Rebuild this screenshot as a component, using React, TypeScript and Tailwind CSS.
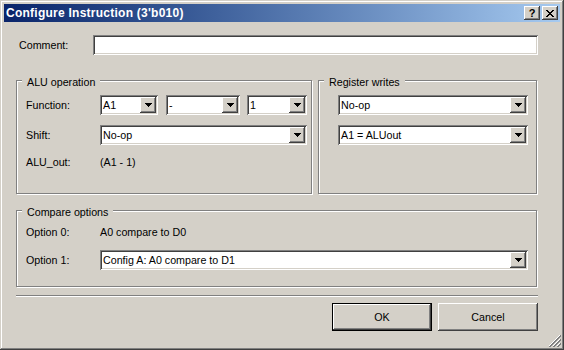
import React from "react";

const raised =
  "shadow-[inset_-1px_-1px_#404040,inset_1px_1px_#ffffff,inset_-2px_-2px_#808080,inset_2px_2px_#d4d0c8]";
const sunken =
  "shadow-[inset_1px_1px_#808080,inset_-1px_-1px_#ffffff,inset_2px_2px_#404040,inset_-2px_-2px_#d4d0c8]";

function Combo({ value, width }: { value: string; width: string }) {
  return (
    <div className={`${width} h-[20px] bg-white p-[2px] flex ${sunken}`}>
      <span className="flex-1 pl-[1px] leading-[16px] truncate">{value}</span>
      <div className={`w-[16px] h-[16px] bg-[#d4d0c8] flex items-center justify-center ${raised}`}>
        <svg width="7" height="4" viewBox="0 0 7 4">
          <path d="M0 0h7v1H0zM1 1h5v1H1zM2 2h3v1H2zM3 3h1v1H3z" fill="#000" />
        </svg>
      </div>
    </div>
  );
}

function Group({
  title,
  className,
  children,
}: {
  title: string;
  className: string;
  children: React.ReactNode;
}) {
  return (
    <div
      className={`relative border border-[#808080] shadow-[inset_1px_1px_#ffffff,1px_1px_#ffffff] ${className}`}
    >
      <span className="absolute top-[-5px] left-[5px] px-[5px] bg-[#d4d0c8] leading-[13px]">
        {title}
      </span>
      {children}
    </div>
  );
}

function Row({ label, children }: { label: string; children: React.ReactNode }) {
  return (
    <div className="flex items-center h-[20px]">
      <span className="w-[74px] pl-[9px] box-content">{label}</span>
      {children}
    </div>
  );
}

export default function App() {
  return (
    <div className="w-[564px] h-[350px] bg-[#d4d0c8] text-[10.7px] text-black font-['Liberation_Sans',Arial,sans-serif] relative p-[4px] shadow-[inset_-1px_-1px_#404040,inset_1px_1px_#d4d0c8,inset_-2px_-2px_#808080,inset_2px_2px_#ffffff]">
      {/* title bar */}
      <div className="h-[18px] bg-linear-to-r from-[#0a246a] to-[#a6caf0] flex items-center justify-between pl-[2px] pr-[2px]">
        <span className="text-white font-bold text-[12px] tracking-[0.25px] leading-[18px]">
          Configure Instruction (3'b010)
        </span>
        <div className="flex gap-[2px]">
          <div className={`w-[16px] h-[14px] bg-[#d4d0c8] flex items-center justify-center font-bold text-[11px] leading-none ${raised}`}>
            ?
          </div>
          <div className={`w-[16px] h-[14px] bg-[#d4d0c8] flex items-center justify-center ${raised}`}>
            <svg width="8" height="7" viewBox="0 0 8 7">
              <path d="M0 0h2v1H0zM6 0h2v1H6zM1 1h2v1H1zM5 1h2v1H5zM2 2h4v1H2zM3 3h2v1H3zM2 4h4v1H2zM1 5h2v1H1zM5 5h2v1H5zM0 6h2v1H0zM6 6h2v1H6z" fill="#000" />
            </svg>
          </div>
        </div>
      </div>

      {/* body */}
      <div className="ml-[12px] w-[522px] flex flex-col">
        <div className="mt-[13px] flex items-center h-[20px]">
          <span className="w-[77px] pl-[3px]">Comment:</span>
          <div className={`w-[445px] h-[20px] bg-white ${sunken}`} />
        </div>

        <div className="mt-[25px] flex gap-[6px]">
          <Group title="ALU operation" className="w-[296px] h-[114px] pt-[14px]">
            <Row label="Function:">
              <Combo value="A1" width="w-[58px]" />
              <div className="ml-[8px]">
                <Combo value="-" width="w-[74px]" />
              </div>
              <div className="ml-[7px]">
                <Combo value="1" width="w-[60px]" />
              </div>
            </Row>
            <div className="mt-[10px]">
              <Row label="Shift:">
                <Combo value="No-op" width="w-[207px]" />
              </Row>
            </div>
            <div className="mt-[7px]">
              <Row label="ALU_out:">
                <span>(A1 - 1)</span>
              </Row>
            </div>
          </Group>
          <Group title="Register writes" className="w-[219px] h-[114px] pt-[14px] pl-[19px]">
            <Combo value="No-op" width="w-[190px]" />
            <div className="mt-[10px]">
              <Combo value="A1 = ALUout" width="w-[190px]" />
            </div>
          </Group>
        </div>

        <Group title="Compare options" className="mt-[16px] w-[521px] h-[77px] pt-[11px]">
          <Row label="Option 0:">
            <span>A0 compare to D0</span>
          </Row>
          <div className="mt-[8px]">
            <Row label="Option 1:">
              <Combo value="Config A: A0 compare to D1" width="w-[428px]" />
            </Row>
          </div>
        </Group>

        <div className="mt-[8px] w-[522px] h-[2px] border-t border-[#808080] border-b border-b-white" />

        <div className="mt-[6px] flex justify-end gap-[6px]">
          <div className="w-[100px] h-[28px] border border-black">
            <div className={`w-full h-full flex items-center justify-center ${raised}`}>OK</div>
          </div>
          <div className={`w-[100px] h-[28px] flex items-center justify-center ${raised}`}>
            Cancel
          </div>
        </div>
      </div>

      {/* size grip */}
      <svg className="absolute right-[3px] bottom-[3px]" width="12" height="12" viewBox="0 0 12 12">
        <path d="M11 0L0 11M11 4L4 11M11 8L8 11" stroke="#ffffff" strokeWidth="1" />
        <path d="M12 0L0 12M12 1L1 12M12 4L4 12M12 5L5 12M12 8L8 12M12 9L9 12" stroke="#808080" strokeWidth="1" />
      </svg>
    </div>
  );
}
